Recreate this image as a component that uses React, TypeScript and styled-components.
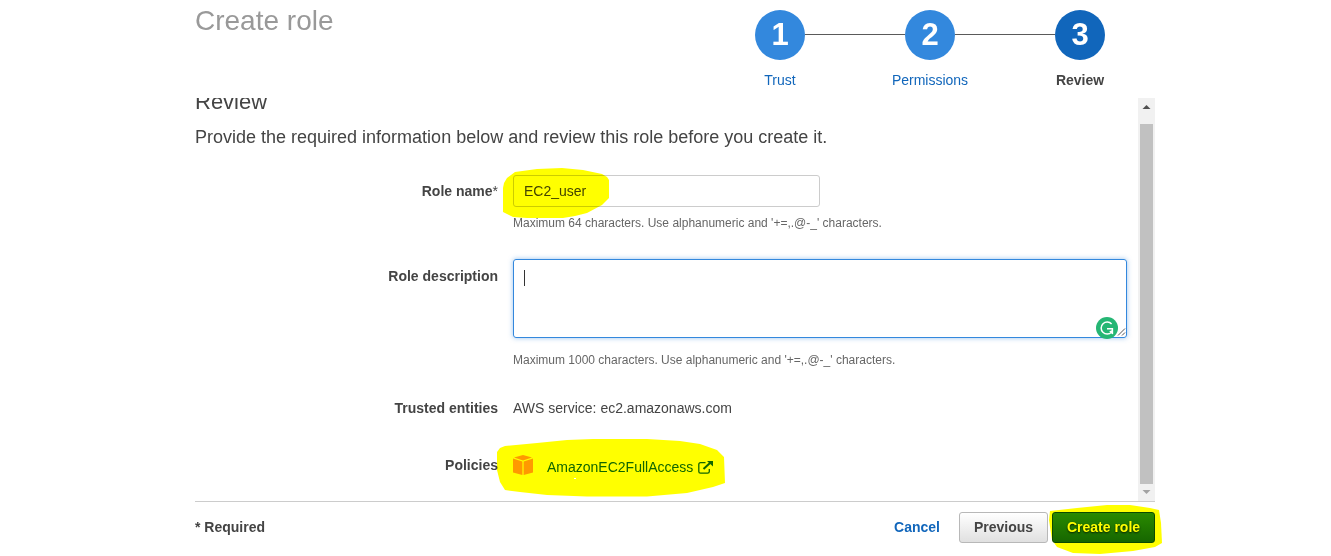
import React from 'react';
import styled, { createGlobalStyle, css } from 'styled-components';

const GlobalStyle = createGlobalStyle`
  * { box-sizing: border-box; }
  body {
    margin: 0;
    background: #fff;
    color: #444;
    font: 14px/20px "Liberation Sans", Arial, sans-serif;
    overflow: hidden;
  }
`;

const Page = styled.div`
  position: relative;
  height: 556px;
  padding-left: 195px;
`;

const Console = styled.main`
  display: flex;
  flex-direction: column;
  width: 960px;
  height: 100%;
`;

const Header = styled.header`
  display: flex;
  justify-content: space-between;
  height: 98px;
`;

const Title = styled.h1`
  margin: 5px 0 0;
  font-size: 28px;
  line-height: 32px;
  font-weight: 400;
  color: #999;
`;

const Steps = styled.ol`
  display: flex;
  margin: 0;
  padding: 10px 0 0;
  list-style: none;
`;

const Step = styled.li<{ $active?: boolean }>`
  width: 150px;
  text-align: center;
  color: ${(p) => (p.$active ? '#444' : '#1166bb')};
  font-weight: ${(p) => (p.$active ? 700 : 400)};
`;

const StepTrack = styled.div`
  display: flex;
  height: 50px;
  margin-bottom: 10px;
`;

const Connector = styled.span<{ $visible: boolean }>`
  flex: 1;
  height: 1px;
  margin-top: 24px;
  background: ${(p) => (p.$visible ? '#5a5a5a' : 'transparent')};
`;

const StepCircle = styled.span<{ $active?: boolean }>`
  width: 50px;
  height: 50px;
  border-radius: 50%;
  background: ${(p) => (p.$active ? '#1166bb' : '#3388dd')};
  color: #fff;
  font-size: 31px;
  line-height: 50px;
  font-weight: 700;
`;

const ScrollPane = styled.section`
  display: flex;
  height: 403px;
  overflow: hidden;
`;

const Content = styled.div`
  flex: 1;
`;

const Heading = styled.h2`
  margin: -9px 0 0;
  font-size: 22px;
  line-height: 26px;
  font-weight: 400;
`;

const Intro = styled.p`
  margin: 9px 0 25px;
  font-size: 18px;
  line-height: 26px;
`;

const FormRow = styled.div<{ $after: number }>`
  display: grid;
  grid-template-columns: 303px 614px;
  column-gap: 15px;
  margin-bottom: ${(p) => p.$after}px;
`;

const Label = styled.label<{ $line?: number }>`
  text-align: right;
  font-weight: 700;
  line-height: ${(p) => p.$line ?? 20}px;
`;

const Asterisk = styled.span`
  font-weight: 400;
`;

const TextInput = styled.div`
  width: 307px;
  height: 32px;
  padding: 0 10px;
  border: 1px solid #ccc;
  border-radius: 3px;
  line-height: 30px;
`;

const TextArea = styled.div`
  position: relative;
  height: 79px;
  padding: 10px;
  border: 1px solid #3388dd;
  border-radius: 3px;
  box-shadow: 0 0 5px rgba(51, 136, 221, 0.5);
`;

const Caret = styled.span`
  display: block;
  width: 1px;
  height: 16px;
  background: #333;
`;

const AreaBadge = styled.svg`
  position: absolute;
  right: -1px;
  bottom: -2px;
`;

const Help = styled.div<{ $gap: number }>`
  margin-top: ${(p) => p.$gap}px;
  font-size: 12px;
  line-height: 16px;
  color: #666;
`;

const Policy = styled.div`
  display: flex;
  align-items: flex-start;
  color: #1166bb;
`;

const PolicyName = styled.span`
  margin: 2px 5px 0 14px;
`;

const LinkIcon = styled.svg`
  margin-top: 6px;
`;

const Scrollbar = styled.div`
  display: flex;
  flex-direction: column;
  align-items: center;
  width: 17px;
  background: #f1f1f1;
`;

const Arrow = styled.svg`
  flex: none;
`;

const Thumb = styled.div`
  width: 13px;
  height: 360px;
  background: #c1c1c1;
`;

const Footer = styled.footer`
  display: flex;
  align-items: flex-start;
  height: 55px;
  padding-top: 10px;
  border-top: 1px solid #ccc;
  font-weight: 700;
  line-height: 31px;
`;

const Required = styled.span`
  flex: 1;
`;

const Cancel = styled.a`
  margin-right: 19px;
  color: #1166bb;
`;

const Button = styled.button<{ $primary?: boolean }>`
  width: ${(p) => (p.$primary ? 103 : 89)}px;
  height: 31px;
  padding: 0;
  border-radius: 3px;
  font: 700 14px/29px "Liberation Sans", Arial, sans-serif;
  ${(p) =>
    p.$primary
      ? css`
          margin-left: 4px;
          border: 1px solid #0c4a00;
          color: #fff;
          background: linear-gradient(#2a8a08, #166600);
          text-shadow: 0 1px 2px rgba(0, 0, 0, 0.8);
        `
      : css`
          border: 1px solid #b8b8b8;
          color: #444;
          background: linear-gradient(#fff, #e0e0e0);
        `}
`;

const Marker = styled.svg`
  position: absolute;
  top: 0;
  left: 0;
  mix-blend-mode: multiply;
  pointer-events: none;
`;

const steps = ['Trust', 'Permissions', 'Review'];

const PolicyIcon = () => (
  <svg width="20" height="20" viewBox="0 0 20 20" fill="#ff9900">
    <path d="M10 0 19 2.6 10 5.4 1 2.6Z" />
    <path d="M0 3.6 9.4 6.4V20L0 17.4Z" />
    <path d="M20 3.6 10.6 6.4V20L20 17.4Z" />
  </svg>
);

const ExternalIcon = () => (
  <LinkIcon width="15" height="13" viewBox="0 0 15 13" fill="none" stroke="#1166bb">
    <path d="M7.5 1.7H2.5Q.8 1.7 .8 3.4V10.5Q.8 12.2 2.5 12.2H9.6Q11.3 12.2 11.3 10.5V8" strokeWidth="1.3" />
    <path d="M5.5 8 12 2" strokeWidth="2" />
    <path d="M9 0H15V5.5Z" fill="#1166bb" stroke="none" />
  </LinkIcon>
);

export default function App() {
  return (
    <>
      <GlobalStyle />
      <Page>
        <Console>
          <Header>
            <Title>Create role</Title>
            <Steps>
              {steps.map((name, i) => (
                <Step key={name} $active={i === 2}>
                  <StepTrack>
                    <Connector $visible={i > 0} />
                    <StepCircle $active={i === 2}>{i + 1}</StepCircle>
                    <Connector $visible={i < 2} />
                  </StepTrack>
                  {name}
                </Step>
              ))}
            </Steps>
          </Header>
          <ScrollPane>
            <Content>
              <Heading>Review</Heading>
              <Intro>Provide the required information below and review this role before you create it.</Intro>
              <FormRow $after={28}>
                <Label $line={32}>
                  Role name<Asterisk>*</Asterisk>
                </Label>
                <div>
                  <TextInput>EC2_user</TextInput>
                  <Help $gap={8}>Maximum 64 characters. Use alphanumeric and '+=,.@-_' characters.</Help>
                </div>
              </FormRow>
              <FormRow $after={30}>
                <Label $line={34}>Role description</Label>
                <div>
                  <TextArea>
                    <Caret />
                    <AreaBadge width="31" height="22" viewBox="0 0 31 22" fill="none">
                      <path d="M22 18.5 29 11.5M26 18.5 29 15.5" stroke="#555" />
                      <circle cx="11" cy="11" r="11" fill="#25b674" />
                      <path d="M15.6 7A6 6 0 1 0 15.5 15.2" stroke="#fff" strokeWidth="1.5" />
                      <path d="M11 11.8H16.4V17" stroke="#fff" strokeWidth="1.5" />
                      <path d="M13.2 14.2 16.8 13V17.4Z" fill="#fff" />
                    </AreaBadge>
                  </TextArea>
                  <Help $gap={14}>Maximum 1000 characters. Use alphanumeric and '+=,.@-_' characters.</Help>
                </div>
              </FormRow>
              <FormRow $after={37}>
                <Label>Trusted entities</Label>
                <span>AWS service: ec2.amazonaws.com</span>
              </FormRow>
              <FormRow $after={0}>
                <Label>Policies</Label>
                <Policy>
                  <PolicyIcon />
                  <PolicyName>AmazonEC2FullAccess</PolicyName>
                  <ExternalIcon />
                </Policy>
              </FormRow>
            </Content>
            <Scrollbar>
              <Arrow width="17" height="26" viewBox="0 0 17 26">
                <path d="M4.5 11 8.5 7 12.5 11Z" fill="#505050" />
              </Arrow>
              <Thumb />
              <Arrow width="17" height="17" viewBox="0 0 17 17">
                <path d="M4.5 6 8.5 10 12.5 6Z" fill="#a3a3a3" />
              </Arrow>
            </Scrollbar>
          </ScrollPane>
          <Footer>
            <Required>* Required</Required>
            <Cancel>Cancel</Cancel>
            <Button>Previous</Button>
            <Button $primary>Create role</Button>
          </Footer>
        </Console>
        <Marker width="1331" height="556" viewBox="0 0 1331 556" fill="#ffff00">
          <path d="M503 188 504 183 507 178 515 172 537 169 562 168 583 170 602 174 607 177 609 180V198L602 205 587 213 575 216 563 218H527L513 217 503 212Z" />
          <path d="M497 452 500 448 505 446 537 443 567 440 593 439H647L680 441 700 444 717 450 724 457 725 483 713 487 687 493 647 496.5H587L547 495 520 492 505 490 500 482 497 470Z" />
          <path d="M1050 511 1077 508 1107 505H1130L1150 508 1159 510 1161 523 1162 543 1155 547 1133 551 1100 554 1073 553 1057 547 1052 540 1049 520Z" />
          <path d="M574 478H576V479H574Z" fill="#fff" />
        </Marker>
      </Page>
    </>
  );
}
